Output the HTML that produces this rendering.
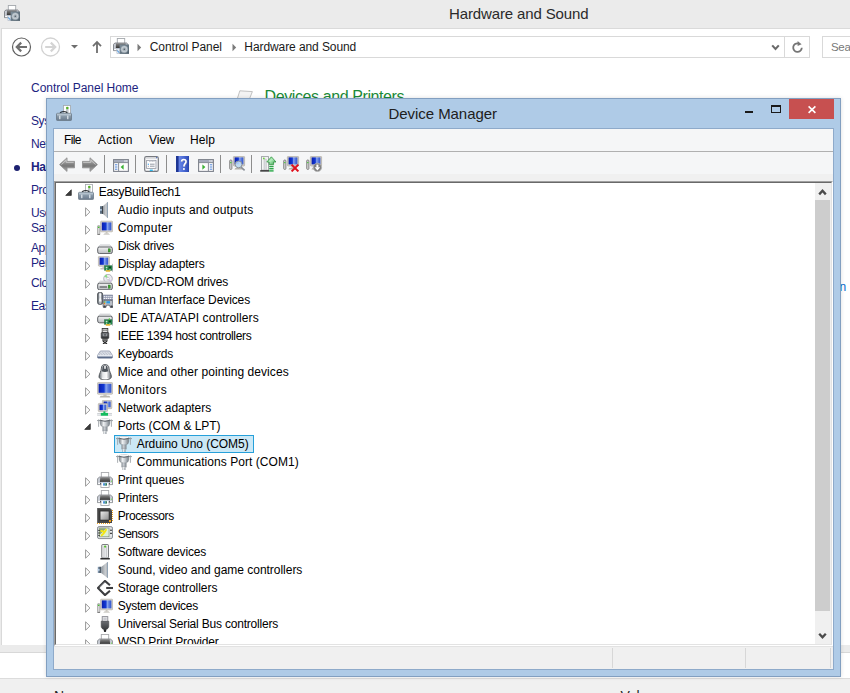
<!DOCTYPE html><html><head><meta charset="utf-8"><title>Device Manager</title><style>

html,body{margin:0;padding:0}
body{width:850px;height:693px;overflow:hidden;background:#fff;position:relative;font-family:"Liberation Sans",sans-serif;font-size:12px;color:#000}
div,span,svg{position:absolute;box-sizing:border-box}
.t{white-space:pre;line-height:18px;height:18px}
.nav{color:#1c2480}

</style></head><body>
<svg width="0" height="0" style="left:0;top:0"><defs>
<linearGradient id="gScr" x1="0" y1="0" x2="1" y2="0"><stop offset="0" stop-color="#0a1eae"/><stop offset="0.42" stop-color="#1238d4"/><stop offset="0.58" stop-color="#8aa6ee"/><stop offset="0.75" stop-color="#5a7ade"/><stop offset="1" stop-color="#2f54cc"/></linearGradient>
<linearGradient id="gBox" x1="0" y1="0" x2="0" y2="1"><stop offset="0" stop-color="#9fb0bd"/><stop offset="1" stop-color="#68788a"/></linearGradient>
<linearGradient id="gCone" x1="0" y1="0" x2="1" y2="0"><stop offset="0" stop-color="#8f9499"/><stop offset="0.6" stop-color="#c9cdd1"/><stop offset="1" stop-color="#a9adb2"/></linearGradient>
<linearGradient id="gDrv" x1="0" y1="0" x2="0" y2="1"><stop offset="0" stop-color="#f4f4f4"/><stop offset="1" stop-color="#b9bcc0"/></linearGradient>
<linearGradient id="gDark" x1="0" y1="0" x2="0" y2="1"><stop offset="0" stop-color="#6a6d72"/><stop offset="1" stop-color="#2e3033"/></linearGradient>
<linearGradient id="gPort" x1="0" y1="0" x2="0" y2="1"><stop offset="0" stop-color="#8d979e"/><stop offset="0.5" stop-color="#c7cdd1"/><stop offset="1" stop-color="#7d868c"/></linearGradient>
<linearGradient id="gPortH" x1="0" y1="0" x2="1" y2="0"><stop offset="0" stop-color="#7a8289"/><stop offset="0.35" stop-color="#eef0f2"/><stop offset="0.6" stop-color="#c6cbd0"/><stop offset="1" stop-color="#747c83"/></linearGradient>
<linearGradient id="gRemote" x1="0" y1="0" x2="1" y2="0"><stop offset="0" stop-color="#555b63"/><stop offset="0.5" stop-color="#c9ced4"/><stop offset="1" stop-color="#5d636b"/></linearGradient>
<linearGradient id="gPrn" x1="0" y1="0" x2="0" y2="1"><stop offset="0" stop-color="#8a8a8a"/><stop offset="1" stop-color="#343434"/></linearGradient>
<linearGradient id="gSpk" x1="0" y1="0" x2="1" y2="1"><stop offset="0" stop-color="#7e8e9a"/><stop offset="1" stop-color="#4e5e6a"/></linearGradient>
<linearGradient id="gMouse" x1="0" y1="0" x2="1" y2="0"><stop offset="0" stop-color="#5a6068"/><stop offset="0.3" stop-color="#e4e6e8"/><stop offset="0.6" stop-color="#fbfbfc"/><stop offset="1" stop-color="#5a6068"/></linearGradient>
<linearGradient id="gCpu" x1="0" y1="0" x2="1" y2="1"><stop offset="0" stop-color="#f0f0f0"/><stop offset="1" stop-color="#8a8a8a"/></linearGradient>
<linearGradient id="gArr" x1="0" y1="0" x2="0" y2="1"><stop offset="0" stop-color="#cacaca"/><stop offset="0.45" stop-color="#868686"/><stop offset="0.6" stop-color="#787878"/><stop offset="1" stop-color="#b0b0b0"/></linearGradient>
<linearGradient id="gHelp" x1="0" y1="0" x2="1" y2="0"><stop offset="0" stop-color="#203a9c"/><stop offset="0.2" stop-color="#6a88e8"/><stop offset="0.6" stop-color="#4a6ad4"/><stop offset="0.9" stop-color="#3250bc"/><stop offset="1" stop-color="#2640a4"/></linearGradient>
<linearGradient id="gGreen" x1="0" y1="0" x2="1" y2="1"><stop offset="0" stop-color="#5ccf6a"/><stop offset="0.45" stop-color="#b4ecbc"/><stop offset="1" stop-color="#2a9a44"/></linearGradient>
</defs></svg>
<div style="left:0;top:0;width:850px;height:29px;background:#ebebeb"></div>
<div style="left:0;top:28px;width:2px;height:625px;background:#ebebeb;border-right:1px solid #d9d9d9"></div>
<div style="left:1px;top:28px;width:849px;height:1px;background:#dadada"></div>
<span class="t" style="left:449px;top:5px;font-size:15px;letter-spacing:-0.133px;color:#2a2a2a">Hardware and Sound</span>
<svg style="left:4px;top:5px" width="16" height="16" viewBox="0 0 16 16"><rect x="4.3" y="0.5" width="7.4" height="5.4" fill="#fff" stroke="#a4a8ad" stroke-width="0.9"/><path d="M1.8 5H13.6L15 6.4V12.6H0.5V6.4Z" fill="#c6cad2" stroke="#6e7278" stroke-width="0.8"/><path d="M3 5.2H12.6V10H2.8Z" fill="url(#gPrn)"/><rect x="1.2" y="11" width="2.4" height="1.2" fill="#fff"/><rect x="3.9" y="10.4" width="4" height="5.2" fill="#e8eef6" stroke="#a9b4c4" stroke-width="0.6"/><path d="M4.6 12.4a2 2 0 0 0 1.8 2" stroke="#3a8ad8" stroke-width="1" fill="none"/><rect x="6.6" y="6.5" width="9.4" height="9.4" fill="url(#gSpk)"/><circle cx="11.3" cy="11.2" r="3.5" fill="#c6ced4" stroke="#8a98a4" stroke-width="0.5"/><circle cx="11.3" cy="11.2" r="2" fill="#aab4bc"/><circle cx="11.3" cy="11.2" r="0.8" fill="#4e5a64"/></svg>
<svg style="left:10px;top:35px" width="24" height="24" viewBox="0 0 24 24"><circle cx="11.5" cy="12" r="9" fill="#fff" stroke="#606060" stroke-width="1.2"/><path d="M17 12H7.4M11.2 7.6L6.8 12L11.2 16.4" fill="none" stroke="#707070" stroke-width="2.2"/></svg><svg style="left:39px;top:35px" width="24" height="24" viewBox="0 0 24 24"><circle cx="11.5" cy="12" r="9" fill="#fff" stroke="#d2d2d2" stroke-width="1.3"/><path d="M6.2 12H15.8M11.8 7.6L16.2 12L11.8 16.4" fill="none" stroke="#d4d4d4" stroke-width="2.2"/></svg><svg style="left:71px;top:45px" width="8" height="4" viewBox="0 0 8 4"><path d="M0 0h7L3.5 3.6z" fill="#6e6e6e"/></svg><svg style="left:91px;top:40px" width="12" height="14" viewBox="0 0 12 14"><path d="M6 13V2M2 6.2L6 2L10 6.2" fill="none" stroke="#6e6e6e" stroke-width="1.8"/></svg>
<div style="left:110px;top:36px;width:675px;height:22px;border:1px solid #d9d9d9;background:#fff"></div>
<div style="left:784px;top:36px;width:26px;height:22px;border:1px solid #d9d9d9;background:#fff"></div>
<div style="left:822px;top:36px;width:40px;height:22px;border:1px solid #d9d9d9;background:#fff"></div>
<svg style="left:113px;top:38px" width="16" height="16" viewBox="0 0 16 16"><rect x="4.3" y="0.5" width="7.4" height="5.4" fill="#fff" stroke="#a4a8ad" stroke-width="0.9"/><path d="M1.8 5H13.6L15 6.4V12.6H0.5V6.4Z" fill="#c6cad2" stroke="#6e7278" stroke-width="0.8"/><path d="M3 5.2H12.6V10H2.8Z" fill="url(#gPrn)"/><rect x="1.2" y="11" width="2.4" height="1.2" fill="#fff"/><rect x="3.9" y="10.4" width="4" height="5.2" fill="#e8eef6" stroke="#a9b4c4" stroke-width="0.6"/><path d="M4.6 12.4a2 2 0 0 0 1.8 2" stroke="#3a8ad8" stroke-width="1" fill="none"/><rect x="6.6" y="6.5" width="9.4" height="9.4" fill="url(#gSpk)"/><circle cx="11.3" cy="11.2" r="3.5" fill="#c6ced4" stroke="#8a98a4" stroke-width="0.5"/><circle cx="11.3" cy="11.2" r="2" fill="#aab4bc"/><circle cx="11.3" cy="11.2" r="0.8" fill="#4e5a64"/></svg>
<svg style="left:137px;top:43px" width="5" height="9" viewBox="0 0 5 9"><path d="M0.5 0.8L4.2 4.5L0.5 8.2z" fill="#7a7a7a"/></svg><svg style="left:232px;top:43px" width="5" height="9" viewBox="0 0 5 9"><path d="M0.5 0.8L4.2 4.5L0.5 8.2z" fill="#7a7a7a"/></svg><svg style="left:771px;top:44px" width="9" height="7" viewBox="0 0 9 7"><path d="M1.2 1.4L4.5 5L7.8 1.4" fill="none" stroke="#6a6a6a" stroke-width="2.1"/></svg><svg style="left:791px;top:41px" width="13" height="13" viewBox="0 0 13 13"><path d="M7.4 2.4A4.3 4.3 0 1 0 10.8 6.8" fill="none" stroke="#757575" stroke-width="1.8"/><path d="M6.6 0L10.6 3.2L6.6 5z" fill="#757575"/></svg>
<span class="t" style="left:149.7px;top:38px;letter-spacing:-0.035px;color:#1a1a1a">Control Panel</span>
<span class="t" style="left:244.3px;top:38px;letter-spacing:-0.084px;color:#1a1a1a">Hardware and Sound</span>
<span class="t" style="left:831px;top:38px;font-size:11.5px;letter-spacing:-0.3px;color:#787878">Sea</span>
<span class="t nav" style="left:31px;top:79px;letter-spacing:-0.033px">Control Panel Home</span>
<span class="t nav" style="left:31px;top:112px;letter-spacing:-0.4px;">Sys</span>
<span class="t nav" style="left:31px;top:135px;letter-spacing:-0.4px;">Net</span>
<span class="t nav" style="left:31px;top:158px;letter-spacing:-0.4px;font-weight:bold;">Har</span>
<span class="t nav" style="left:31px;top:181px;letter-spacing:-0.4px;">Pro</span>
<span class="t nav" style="left:31px;top:204px;letter-spacing:-0.4px;">Use</span>
<span class="t nav" style="left:31px;top:219px;letter-spacing:-0.4px;">Saf</span>
<span class="t nav" style="left:31px;top:239px;letter-spacing:-0.4px;">App</span>
<span class="t nav" style="left:31px;top:254px;letter-spacing:-0.4px;">Per</span>
<span class="t nav" style="left:31px;top:274px;letter-spacing:-0.4px;">Clo</span>
<span class="t nav" style="left:31px;top:297px;letter-spacing:-0.4px;">Eas</span>
<div style="left:14px;top:165px;width:6px;height:6px;border-radius:3px;background:#1c2070"></div>
<span class="t" style="left:264.5px;top:88px;font-size:16px;letter-spacing:-0.401px;color:#1a8a38">Devices and Printers</span>
<svg style="left:236px;top:88px" width="20" height="10" viewBox="0 0 20 10"><path d="M3.8 2.8L16.4 3.6L13.6 10.5H1.4z" fill="#f3f3f3" stroke="#b4b4b4" stroke-width="0.8"/></svg>
<span class="t" style="left:839.5px;top:278px;color:#0a68cc">n</span>
<div style="left:0;top:645px;width:850px;height:8px;background:#ebebeb;border-bottom:1px solid #d8d8d8"></div>
<div style="left:0;top:678px;width:850px;height:15px;background:#f0f0f0;border-top:1px solid #dcdcdc"></div>
<span class="t" style="left:54px;top:687px;font-size:14px;color:#262626">N</span>
<span class="t" style="left:620.5px;top:687px;font-size:14px;color:#262626">Val</span>
<div style="left:46px;top:98px;width:795px;height:579px;background:#afcbe7;border:1px solid #829fc0;box-shadow:0 0 4px rgba(0,0,0,0.14)"></div>
<div style="left:53px;top:128px;width:781px;height:542px;border:1px solid #8eaaca;background:#f0f0f0"></div>
<div style="left:789px;top:99px;width:45px;height:20px;background:#c75050"></div>
<div style="left:745px;top:111px;width:8px;height:2px;background:#1a1a1a"></div><div style="left:771px;top:105px;width:10px;height:8px;border:1px solid #1a1a1a;border-top-width:2px"></div><svg style="left:807px;top:105px" width="10" height="9" viewBox="0 0 10 9"><path d="M1.6 1.4L8.4 7.8M8.4 1.4L1.6 7.8" stroke="#fff" stroke-width="1.6"/></svg>
<svg style="left:56px;top:105px" width="16" height="16" viewBox="0 0 16 16"><rect x="7.5" y="0.5" width="7" height="8" fill="#fff" stroke="#a2a7ac" stroke-width="0.8"/><rect x="10" y="2" width="2.6" height="6" fill="#c3c9ce"/><circle cx="11.3" cy="3" r="1.2" fill="#55b424"/><path d="M4.2 8.6C4.2 5.8 11.3 5.8 11.3 8.6" stroke="#2b2f33" stroke-width="1.2" fill="none"/><rect x="0.5" y="8.3" width="15" height="7.3" rx="1" fill="url(#gBox)" stroke="#62707c" stroke-width="0.7"/><rect x="1" y="8.7" width="14" height="1.7" fill="#b4c2ce"/><rect x="3.2" y="10.6" width="1.2" height="3.6" fill="#e4eaef"/><rect x="11.2" y="10.6" width="1.2" height="3.6" fill="#e4eaef"/></svg>
<span class="t" style="left:388.5px;top:105px;font-size:15px;color:#202020;letter-spacing:-0.055px">Device Manager</span>
<div style="left:54px;top:129px;width:779px;height:22px;background:#f5f6f7"></div>
<div style="left:54px;top:151px;width:779px;height:1px;background:#b0b0b0"></div>
<div style="left:54px;top:152px;width:779px;height:22px;background:#f5f6f7"></div>
<span class="t" style="left:64px;top:131px;letter-spacing:-0.615px">File</span>
<span class="t" style="left:98px;top:131px;letter-spacing:0.228px">Action</span>
<span class="t" style="left:149px;top:131px;letter-spacing:-0.099px">View</span>
<span class="t" style="left:190px;top:131px;letter-spacing:0.104px">Help</span>
<svg style="left:59px;top:157px" width="16" height="16" viewBox="0 0 16 16"><path d="M0.6 7.6L8 0.8V4.4H15.6V10.8H8V14.4Z" fill="url(#gArr)" stroke="#8e8e8e" stroke-width="0.9" stroke-linejoin="round"/><path d="M2.4 7.6L7.2 3.2V5.4H14.6" fill="none" stroke="#cfcfcf" stroke-width="0.8"/></svg><svg style="left:82px;top:157px" width="16" height="16" viewBox="0 0 16 16"><path d="M15.4 7.6L8 0.8V4.4H0.4V10.8H8V14.4Z" fill="url(#gArr)" stroke="#8e8e8e" stroke-width="0.9" stroke-linejoin="round"/><path d="M1.2 5.4H8.8V3.2L13.6 7.6" fill="none" stroke="#cfcfcf" stroke-width="0.8"/></svg><div style="left:104px;top:155px;width:1px;height:18px;background:#8d8d8d"></div><svg style="left:113px;top:159px" width="16" height="13" viewBox="0 0 16 13"><rect x="0.6" y="0.6" width="14.8" height="11.8" fill="#fdfdfd" stroke="#7d828c" stroke-width="1.1"/><rect x="1" y="1" width="14" height="2.4" fill="#a4aaba"/><path d="M1 3.6h14" stroke="#7d828c" stroke-width="0.9"/><rect x="11.4" y="1.4" width="1.2" height="1.2" fill="#fff"/><rect x="13.2" y="1.4" width="1.2" height="1.2" fill="#fff"/><path d="M5.6 4v8" stroke="#7d828c" stroke-width="0.9"/><path d="M2 5.8h2.4M2 8h2.4M2 10.2h2.4" stroke="#3a78d8" stroke-width="0.9"/><path d="M10.6 5.4v5.4L7.6 8.1z" fill="#3ab034"/></svg><div style="left:135px;top:155px;width:1px;height:18px;background:#8d8d8d"></div><svg style="left:144px;top:156px" width="15" height="16" viewBox="0 0 15 16"><rect x="0.7" y="0.7" width="13.6" height="14.6" rx="1.6" fill="#fcfcfd" stroke="#777a80" stroke-width="1.2"/><path d="M1.6 2.2h11.8" stroke="#c4c7cd" stroke-width="0.8"/><rect x="12" y="1" width="1.2" height="1.2" fill="#5a78c0"/><rect x="2.6" y="4.4" width="9.4" height="8" fill="#fdfdfe" stroke="#9a9ea8" stroke-width="0.9"/><rect x="5.6" y="4.9" width="2" height="0.9" fill="#fff" stroke="#b4b8c0" stroke-width="0.4"/><rect x="8.6" y="4.9" width="2" height="0.9" fill="#fff" stroke="#b4b8c0" stroke-width="0.4"/><path d="M6 8.2h4.6M6 10.2h4.6" stroke="#8a8e98" stroke-width="0.9"/><rect x="3.8" y="7.7" width="1.1" height="1.1" fill="#2a9af0"/><rect x="3.9" y="9.8" width="0.9" height="0.9" fill="#8a8e98"/><rect x="5.8" y="13.6" width="3" height="1.3" fill="#1cb4ee"/><rect x="10" y="13.8" width="2.4" height="1" fill="#b4b8c0"/></svg><div style="left:166px;top:155px;width:1px;height:18px;background:#8d8d8d"></div><svg style="left:176px;top:156px" width="13" height="16" viewBox="0 0 13 16"><rect x="0" y="0" width="13" height="16" fill="url(#gHelp)"/><rect x="0" y="0" width="2.6" height="16" fill="#1e3694"/><path d="M5.6 5.6C5.6 2.8 10 2.8 10 5.4C10 7.4 7.9 7.8 7.9 10.4" fill="none" stroke="#7a86b8" stroke-width="1.6" transform="translate(0.5,0.5)"/><path d="M5.6 5.6C5.6 2.8 10 2.8 10 5.4C10 7.4 7.9 7.8 7.9 10.4" fill="none" stroke="#fff" stroke-width="1.6"/><circle cx="7.9" cy="13" r="1.05" fill="#fff"/></svg><svg style="left:198px;top:159px" width="16" height="13" viewBox="0 0 16 13"><rect x="0.6" y="0.6" width="14.8" height="11.8" fill="#fdfdfd" stroke="#7d828c" stroke-width="1.1"/><rect x="1" y="1" width="14" height="2.4" fill="#a4aaba"/><path d="M1 3.6h14" stroke="#7d828c" stroke-width="0.9"/><rect x="11.4" y="1.4" width="1.2" height="1.2" fill="#fff"/><rect x="13.2" y="1.4" width="1.2" height="1.2" fill="#fff"/><path d="M10.4 4v8" stroke="#7d828c" stroke-width="0.9"/><path d="M11.8 5.8h2.4M11.8 8h2.4M11.8 10.2h2.4" stroke="#3a78d8" stroke-width="0.9"/><path d="M4.4 5.4v5.4L7.4 8.1z" fill="#3ab034"/></svg><div style="left:220px;top:155px;width:1px;height:18px;background:#8d8d8d"></div><svg style="left:229px;top:156px" width="17" height="16" viewBox="0 0 17 16"><g transform="translate(0,0)"><rect x="4.4" y="0.4" width="11.2" height="9.6" rx="0.8" fill="#d4d1c9" stroke="#a29e95" stroke-width="0.6"/><rect x="5.6" y="1.4" width="8.8" height="7" fill="url(#gScr)"/><rect x="8.4" y="10" width="3" height="2" fill="#c4c1b9"/><path d="M6.4 12h7l1 1.4h-9z" fill="#b4b1a9"/><rect x="0.7" y="4" width="2.2" height="9.4" rx="0.9" fill="#d4d4d4" stroke="#6e6e6e" stroke-width="0.8"/><rect x="1.2" y="6" width="1.2" height="1.2" fill="#40c830"/></g><circle cx="9.6" cy="8.4" r="3.4" fill="#bfe0f8" fill-opacity="0.85" stroke="#8a9098" stroke-width="1"/><path d="M12 11l3.6 3.4" stroke="#8a8f96" stroke-width="1.6"/></svg><div style="left:251px;top:155px;width:1px;height:18px;background:#8d8d8d"></div><svg style="left:260px;top:156px" width="16" height="16" viewBox="0 0 16 16"><rect x="1.5" y="0.6" width="7" height="13.6" fill="#f6f6f6" stroke="#9c9fa3" stroke-width="0.9"/><rect x="4" y="3" width="2.2" height="11" fill="#dcdee1" stroke="#b0b3b8" stroke-width="0.5"/><circle cx="3.8" cy="2.4" r="0.9" fill="#6ad040"/><rect x="0.2" y="14.2" width="9" height="1.4" fill="#2b2b2b"/><path d="M11.4 0.8L16 6h-2.4v2.6H9.2V6H6.8z" fill="url(#gGreen)" stroke="#238a34" stroke-width="0.7"/><rect x="9.2" y="9.8" width="4.4" height="1.4" fill="#2aa848"/><rect x="9.2" y="12" width="4.4" height="1.4" fill="#2aa848"/><rect x="9.2" y="14.2" width="4.4" height="1.4" fill="#2aa848"/></svg><svg style="left:283px;top:156px" width="17" height="16" viewBox="0 0 17 16"><g transform="translate(0,0)"><rect x="4.4" y="0.4" width="11.2" height="9.6" rx="0.8" fill="#d4d1c9" stroke="#a29e95" stroke-width="0.6"/><rect x="5.6" y="1.4" width="8.8" height="7" fill="url(#gScr)"/><rect x="8.4" y="10" width="3" height="2" fill="#c4c1b9"/><path d="M6.4 12h7l1 1.4h-9z" fill="#b4b1a9"/><rect x="0.7" y="4" width="2.2" height="9.4" rx="0.9" fill="#d4d4d4" stroke="#6e6e6e" stroke-width="0.8"/><rect x="1.2" y="6" width="1.2" height="1.2" fill="#40c830"/></g><path d="M8.6 8.6L15.4 15.4M15.4 8.6L8.6 15.4" stroke="#e0101c" stroke-width="2"/></svg><svg style="left:306px;top:156px" width="17" height="16" viewBox="0 0 17 16"><g transform="translate(0,0)"><rect x="4.4" y="0.4" width="11.2" height="9.6" rx="0.8" fill="#d4d1c9" stroke="#a29e95" stroke-width="0.6"/><rect x="5.6" y="1.4" width="8.8" height="7" fill="url(#gScr)"/><rect x="8.4" y="10" width="3" height="2" fill="#c4c1b9"/><path d="M6.4 12h7l1 1.4h-9z" fill="#b4b1a9"/><rect x="0.7" y="4" width="2.2" height="9.4" rx="0.9" fill="#d4d4d4" stroke="#6e6e6e" stroke-width="0.8"/><rect x="1.2" y="6" width="1.2" height="1.2" fill="#40c830"/></g><circle cx="11.4" cy="11.4" r="4.2" fill="#808080" stroke="#b4b4b4" stroke-width="0.8"/><path d="M11.4 8.6v3" stroke="#fff" stroke-width="2"/><path d="M8.6 11.2l2.8 3.2 2.8-3.2z" fill="#fff"/></svg>
<div style="left:54px;top:181px;width:779px;height:465px;background:#fff;border:1px solid;border-color:#a0a0a0 #fff #fff #a0a0a0"></div>
<div style="left:55px;top:182px;width:777px;height:463px;background:#fff;border:1px solid;border-color:#696969 #e3e3e3 #e3e3e3 #696969"></div>
<div id="tree" style="left:56px;top:183px;width:759px;height:461px;overflow:hidden">
<svg style="left:9px;top:6px" width="7" height="7" viewBox="0 0 7 7"><path d="M6.3 0.8V6.4H0.7Z" fill="#3c3c3c" stroke="#262626" stroke-width="0.7"/></svg>
<svg style="left:22px;top:1px" width="16" height="16" viewBox="0 0 16 16"><rect x="7.5" y="0.5" width="7" height="8" fill="#fff" stroke="#a2a7ac" stroke-width="0.8"/><rect x="10" y="2" width="2.6" height="6" fill="#c3c9ce"/><circle cx="11.3" cy="3" r="1.2" fill="#55b424"/><path d="M4.2 8.6C4.2 5.8 11.3 5.8 11.3 8.6" stroke="#2b2f33" stroke-width="1.2" fill="none"/><rect x="0.5" y="8.3" width="15" height="7.3" rx="1" fill="url(#gBox)" stroke="#62707c" stroke-width="0.7"/><rect x="1" y="8.7" width="14" height="1.7" fill="#b4c2ce"/><rect x="3.2" y="10.6" width="1.2" height="3.6" fill="#e4eaef"/><rect x="11.2" y="10.6" width="1.2" height="3.6" fill="#e4eaef"/></svg>
<span class="t" style="left:42.7px;top:0px;letter-spacing:-0.261px">EasyBuildTech1</span>
<svg style="left:29px;top:23.6px" width="6" height="10" viewBox="0 0 6 10"><path d="M0.6 0.8V9.2L4.9 5Z" fill="#fff" stroke="#989898" stroke-width="1"/></svg>
<svg style="left:41px;top:19px" width="16" height="16" viewBox="0 0 16 16"><path d="M5.6 4.6L10.2 0.2H11V15.8H10.2L5.6 11.4Z" fill="url(#gCone)"/><rect x="10.1" y="0.2" width="0.9" height="15.6" fill="#8fa2b4"/><rect x="3" y="4.2" width="3" height="7.6" fill="#5d7083"/><rect x="4.9" y="4.2" width="1.1" height="7.6" fill="#3c4248"/><rect x="3" y="7" width="1.9" height="1.8" fill="#a9c0d6"/></svg>
<span class="t" style="left:61.7px;top:18px;letter-spacing:0.147px">Audio inputs and outputs</span>
<svg style="left:29px;top:41.6px" width="6" height="10" viewBox="0 0 6 10"><path d="M0.6 0.8V9.2L4.9 5Z" fill="#fff" stroke="#989898" stroke-width="1"/></svg>
<svg style="left:41px;top:37px" width="16" height="16" viewBox="0 0 16 16"><rect x="3.6" y="1.2" width="12" height="10.6" rx="0.8" fill="#d9d6cf" stroke="#a9a59c" stroke-width="0.6"/><rect x="4.8" y="2.4" width="9.6" height="8.0" fill="url(#gScr)"/><path d="M7.6 13.4h4l1.4 1.2h-6.8z" fill="#b4b1a9"/><rect x="8.6" y="11.8" width="2" height="1.8" fill="#c9c6be"/><rect x="0.5" y="5.6" width="2.4" height="8.6" rx="0.8" fill="#d6d6d6" stroke="#8b8b8b" stroke-width="0.6"/><rect x="1" y="6.6" width="1.4" height="1.4" fill="#3fc02a"/><rect x="0.3" y="14" width="2.8" height="0.8" fill="#6b6b6b"/></svg>
<span class="t" style="left:61.7px;top:36px;letter-spacing:0.259px">Computer</span>
<svg style="left:29px;top:59.6px" width="6" height="10" viewBox="0 0 6 10"><path d="M0.6 0.8V9.2L4.9 5Z" fill="#fff" stroke="#989898" stroke-width="1"/></svg>
<svg style="left:41px;top:55px" width="16" height="16" viewBox="0 0 16 16"><path d="M3.4 7h9.2l2.6 2.4H0.8z" fill="#f4f4f5" stroke="#b0b3b7" stroke-width="0.7"/><rect x="0.7" y="9" width="14.6" height="6.6" rx="1.8" fill="url(#gDrv)" stroke="#5e6165" stroke-width="1"/><rect x="11.2" y="10.8" width="2" height="3.2" fill="#3aa62c" stroke="#2a6a22" stroke-width="0.4"/></svg>
<span class="t" style="left:61.7px;top:54px;letter-spacing:-0.219px">Disk drives</span>
<svg style="left:29px;top:77.6px" width="6" height="10" viewBox="0 0 6 10"><path d="M0.6 0.8V9.2L4.9 5Z" fill="#fff" stroke="#989898" stroke-width="1"/></svg>
<svg style="left:41px;top:73px" width="16" height="16" viewBox="0 0 16 16"><rect x="1.4" y="0.4" width="11" height="9.8" rx="0.8" fill="#d9d6cf" stroke="#a9a59c" stroke-width="0.6"/><rect x="2.5999999999999996" y="1.6" width="8.6" height="7.200000000000001" fill="url(#gScr)"/><rect x="5.4" y="10.2" width="2.4" height="2" fill="#c9c6be"/><path d="M3.4 12.2h5v1.2h-5z" fill="#b9b6ae"/><rect x="7.6" y="9.8" width="7.8" height="4.4" fill="#23884a" stroke="#0f6030" stroke-width="0.5"/><rect x="8.799999999999999" y="10.8" width="1.6" height="1.4" fill="#c4e4cc"/><rect x="11.8" y="10.600000000000001" width="2.2" height="2" fill="#0b4220"/><rect x="9.0" y="12.8" width="1.2" height="0.9" fill="#c4e4cc"/><rect x="12.399999999999999" y="12.8" width="1.2" height="0.9" fill="#c4e4cc"/><rect x="8.799999999999999" y="14.200000000000001" width="4.4" height="1.5" fill="#e8b420"/><rect x="15.1" y="7.800000000000001" width="0.7" height="8" fill="#a4aab0"/></svg>
<span class="t" style="left:61.7px;top:72px;letter-spacing:-0.159px">Display adapters</span>
<svg style="left:29px;top:95.6px" width="6" height="10" viewBox="0 0 6 10"><path d="M0.6 0.8V9.2L4.9 5Z" fill="#fff" stroke="#989898" stroke-width="1"/></svg>
<svg style="left:41px;top:91px" width="16" height="16" viewBox="0 0 16 16"><circle cx="11" cy="4.6" r="4.3" fill="#ececf1" stroke="#9a9aa6" stroke-width="0.7"/><path d="M11 4.6L7.2 2.6A4.3 4.3 0 0 1 9.6 0.6z" fill="#8fdc86"/><path d="M11 4.6L14.8 6.8A4.3 4.3 0 0 1 12.2 8.7z" fill="#dcc4ec"/><circle cx="11" cy="4.6" r="1.3" fill="#fff" stroke="#a8a8b4" stroke-width="0.5"/><path d="M3.4 7.2h9.2l2.6 2.4H0.8z" fill="#f4f4f5" stroke="#b0b3b7" stroke-width="0.7"/><rect x="0.7" y="9.2" width="14.6" height="6.6" rx="1.8" fill="url(#gDrv)" stroke="#5e6165" stroke-width="1"/><rect x="2.6" y="12.4" width="7.4" height="1.2" fill="#55585c"/><rect x="11.2" y="11" width="2" height="3.2" fill="#3aa62c" stroke="#2a6a22" stroke-width="0.4"/></svg>
<span class="t" style="left:61.7px;top:90px;letter-spacing:-0.178px">DVD/CD-ROM drives</span>
<svg style="left:29px;top:113.6px" width="6" height="10" viewBox="0 0 6 10"><path d="M0.6 0.8V9.2L4.9 5Z" fill="#fff" stroke="#989898" stroke-width="1"/></svg>
<svg style="left:41px;top:109px" width="16" height="16" viewBox="0 0 16 16"><rect x="0.6" y="0.4" width="5" height="12" rx="1.8" fill="url(#gRemote)" stroke="#3e4248" stroke-width="0.8"/><path d="M2.2 2.2a1 1 0 1 1 2 0L3.8 5.6L4.6 9.4H1.8L2.6 5.6z" fill="#f4f5f6"/><rect x="6" y="3" width="10" height="5.6" rx="0.8" fill="#8e96ae" stroke="#6a728a" stroke-width="0.5"/><path d="M6.8 4.4h8.6" stroke="#fff" stroke-width="1" stroke-dasharray="1.1 0.8"/><path d="M6.6 6.4h9" stroke="#f2f2f6" stroke-width="1.4" stroke-dasharray="1.4 0.6"/><path d="M7 8.2h8c1.2 1.6 1.4 5.4 0.8 7.4h-2.4l-0.8-2.4H9.6l-0.8 2.4H6.4c-0.6-2-0.6-5.8 0.6-7.4z" fill="#b9bec6" stroke="#4a4e56" stroke-width="0.7"/><rect x="9.4" y="9.2" width="3.6" height="2.2" fill="#2a9ae4"/><circle cx="7.8" cy="10" r="0.8" fill="#40c040"/><circle cx="7.4" cy="11.6" r="0.8" fill="#f08020"/><rect x="6.4" y="13.4" width="2.4" height="2.2" rx="0.8" fill="#3e4248"/><rect x="13.4" y="13.4" width="2.4" height="2.2" rx="0.8" fill="#3e4248"/></svg>
<span class="t" style="left:61.7px;top:108px;letter-spacing:-0.102px">Human Interface Devices</span>
<svg style="left:29px;top:131.6px" width="6" height="10" viewBox="0 0 6 10"><path d="M0.6 0.8V9.2L4.9 5Z" fill="#fff" stroke="#989898" stroke-width="1"/></svg>
<svg style="left:41px;top:127px" width="16" height="16" viewBox="0 0 16 16"><path d="M3.4 4.2h9.2l2.6 2.4H0.8z" fill="#f4f4f5" stroke="#b0b3b7" stroke-width="0.7"/><rect x="0.7" y="6.2" width="14.6" height="6.6" rx="1.8" fill="url(#gDrv)" stroke="#5e6165" stroke-width="1"/><rect x="7.6" y="9.8" width="7.8" height="4.4" fill="#23884a" stroke="#0f6030" stroke-width="0.5"/><rect x="8.799999999999999" y="10.8" width="1.6" height="1.4" fill="#c4e4cc"/><rect x="11.8" y="10.600000000000001" width="2.2" height="2" fill="#0b4220"/><rect x="9.0" y="12.8" width="1.2" height="0.9" fill="#c4e4cc"/><rect x="12.399999999999999" y="12.8" width="1.2" height="0.9" fill="#c4e4cc"/><rect x="8.799999999999999" y="14.200000000000001" width="4.4" height="1.5" fill="#e8b420"/><rect x="15.1" y="7.800000000000001" width="0.7" height="8" fill="#a4aab0"/><rect x="11.8" y="8.2" width="1" height="1.6" fill="#50d030"/></svg>
<span class="t" style="left:61.7px;top:126px;letter-spacing:0.077px">IDE ATA/ATAPI controllers</span>
<svg style="left:29px;top:149.6px" width="6" height="10" viewBox="0 0 6 10"><path d="M0.6 0.8V9.2L4.9 5Z" fill="#fff" stroke="#989898" stroke-width="1"/></svg>
<svg style="left:41px;top:145px" width="16" height="16" viewBox="0 0 16 16"><rect x="5.2" y="0.5" width="5.6" height="4.2" fill="#f2f2f2" stroke="#3a3a3a" stroke-width="0.9"/><rect x="6.4" y="1.4" width="1.1" height="1.8" fill="#4a4a4a"/><rect x="8.5" y="1.4" width="1.1" height="1.8" fill="#4a4a4a"/><rect x="4.2" y="4.6" width="7.6" height="5.8" rx="0.6" fill="url(#gDark)" stroke="#222" stroke-width="0.5"/><rect x="5.8" y="5.6" width="4.4" height="2.6" fill="#9a9da1"/><rect x="6.8" y="6.2" width="2.4" height="1.4" fill="#55585c"/><rect x="5.4" y="10.4" width="5.2" height="2.8" fill="#1e1e1e"/><path d="M5.4 11.3h5.2M5.4 12.3h5.2" stroke="#d0d0d0" stroke-width="0.5"/><path d="M6 13.2l4 2.8M10 13.2l-4 2.8" stroke="#222" stroke-width="1.2"/></svg>
<span class="t" style="left:61.7px;top:144px;letter-spacing:-0.323px">IEEE 1394 host controllers</span>
<svg style="left:29px;top:167.6px" width="6" height="10" viewBox="0 0 6 10"><path d="M0.6 0.8V9.2L4.9 5Z" fill="#fff" stroke="#989898" stroke-width="1"/></svg>
<svg style="left:41px;top:163px" width="16" height="16" viewBox="0 0 16 16"><path d="M3.4 5h9.2l3 4.6v1.6a0.8 0.8 0 0 1-0.8 0.8H1.2a0.8 0.8 0 0 1-0.8-0.8V9.6z" fill="#e9edf4" stroke="#8a93a8" stroke-width="0.8"/><path d="M3.4 6.2h9.4M2.8 7.4h10.6M2.2 8.6h11.8" stroke="#a4aab8" stroke-width="0.8" stroke-dasharray="0.9 0.7"/><path d="M0.6 10.4h14.8v1a0.8 0.8 0 0 1-0.8 0.8H1.4a0.8 0.8 0 0 1-0.8-0.8z" fill="#5a6a88"/></svg>
<span class="t" style="left:61.7px;top:162px;letter-spacing:-0.234px">Keyboards</span>
<svg style="left:29px;top:185.6px" width="6" height="10" viewBox="0 0 6 10"><path d="M0.6 0.8V9.2L4.9 5Z" fill="#fff" stroke="#989898" stroke-width="1"/></svg>
<svg style="left:41px;top:181px" width="16" height="16" viewBox="0 0 16 16"><path d="M8 0.5C5.4 0.5 4.4 2 4.4 4.2C4.4 7 2 10 2 12.6C2 15 4.8 15.8 8 15.8C11.2 15.8 14.4 15 14.4 12.6C14.4 10 12 7 12 4.2C12 2 10.6 0.5 8 0.5Z" fill="url(#gMouse)" stroke="#3e4248" stroke-width="0.8"/><path d="M8 1.2C6 1.2 5.4 2.4 5.4 4.2C5.4 5.4 5 6.4 4.6 7.2C6.8 8.2 9.2 8.2 11.4 7.2C11 6.4 10.6 5.4 10.6 4.2C10.6 2.4 10 1.2 8 1.2Z" fill="#4e545c"/><rect x="7.2" y="1.8" width="1.6" height="3.2" rx="0.8" fill="#f4f4f4"/><path d="M5 14.2C7 15 9.4 15 11.4 14.2" stroke="#fff" stroke-width="0.8" fill="none"/></svg>
<span class="t" style="left:61.7px;top:180px;letter-spacing:0.074px">Mice and other pointing devices</span>
<svg style="left:29px;top:203.6px" width="6" height="10" viewBox="0 0 6 10"><path d="M0.6 0.8V9.2L4.9 5Z" fill="#fff" stroke="#989898" stroke-width="1"/></svg>
<svg style="left:41px;top:199px" width="16" height="16" viewBox="0 0 16 16"><rect x="0.4" y="0.6" width="15.2" height="11.6" rx="0.8" fill="#d9d6cf" stroke="#a9a59c" stroke-width="0.6"/><rect x="1.6" y="1.7999999999999998" width="12.799999999999999" height="9.0" fill="url(#gScr)"/><rect x="6.4" y="12.2" width="3.2" height="1.8" fill="#c9c6be"/><path d="M3.6 13.8h8.8l1 1.6H2.6z" fill="#b9b6ae"/></svg>
<span class="t" style="left:61.7px;top:198px;letter-spacing:0.426px">Monitors</span>
<svg style="left:29px;top:221.6px" width="6" height="10" viewBox="0 0 6 10"><path d="M0.6 0.8V9.2L4.9 5Z" fill="#fff" stroke="#989898" stroke-width="1"/></svg>
<svg style="left:41px;top:217px" width="16" height="16" viewBox="0 0 16 16"><rect x="5.4" y="0.3" width="9.4" height="8.4" rx="0.8" fill="#d9d6cf" stroke="#a9a59c" stroke-width="0.6"/><rect x="6.6000000000000005" y="1.5" width="7.0" height="5.800000000000001" fill="url(#gScr)"/><rect x="1.3" y="3.4" width="9.2" height="8.2" rx="0.8" fill="#d9d6cf" stroke="#a9a59c" stroke-width="0.6"/><rect x="2.5" y="4.6" width="6.799999999999999" height="5.6" fill="url(#gScr)"/><rect x="0.2" y="13.2" width="14.8" height="2.4" fill="#c4c8cc"/><rect x="0.2" y="14" width="14.8" height="0.8" fill="#f0f2f4"/><rect x="3.8" y="12.9" width="7.2" height="2.8" fill="#12bc5e"/><rect x="6.4" y="11.4" width="2" height="1.8" fill="#12bc5e"/></svg>
<span class="t" style="left:61.7px;top:216px;letter-spacing:-0.036px">Network adapters</span>
<svg style="left:28px;top:240px" width="7" height="7" viewBox="0 0 7 7"><path d="M6.3 0.8V6.4H0.7Z" fill="#3c3c3c" stroke="#262626" stroke-width="0.7"/></svg>
<svg style="left:41px;top:235px" width="16" height="16" viewBox="0 0 16 16"><path d="M0.2 2.6h15.6" stroke="#7c8288" stroke-width="0.9"/><rect x="1.2" y="1.4" width="0.9" height="7.4" fill="#9ea4a9"/><rect x="13.9" y="1.4" width="0.9" height="7.4" fill="#9ea4a9"/><path d="M3.2 1.4Q8 -0.2 12.8 1.4V5.2Q12.8 8 10.4 8.6H5.6Q3.2 8 3.2 5.2Z" fill="url(#gPortH)" stroke="#7a8288" stroke-width="0.5"/><ellipse cx="8" cy="1.5" rx="4.6" ry="0.9" fill="#f6f7f8"/><path d="M3.5 2.5Q8 4 12.5 2.5" fill="none" stroke="#4e545a" stroke-width="0.9"/><rect x="5.6" y="8.6" width="4.8" height="4.8" fill="url(#gPortH)"/><path d="M5.6 9.8h4.8M5.6 11.2h4.8M5.6 12.6h4.8" stroke="#8a9197" stroke-width="0.6"/><rect x="6.6" y="13.4" width="2.8" height="2.6" fill="url(#gPortH)"/></svg>
<span class="t" style="left:61.7px;top:234px;letter-spacing:-0.082px">Ports (COM &amp; LPT)</span>
<div style="left:58px;top:252px;width:140px;height:18px;background:#cbe8f6;border:1px solid #26a0da"></div>
<svg style="left:60px;top:253px" width="16" height="16" viewBox="0 0 16 16"><path d="M0.2 2.6h15.6" stroke="#7c8288" stroke-width="0.9"/><rect x="1.2" y="1.4" width="0.9" height="7.4" fill="#9ea4a9"/><rect x="13.9" y="1.4" width="0.9" height="7.4" fill="#9ea4a9"/><path d="M3.2 1.4Q8 -0.2 12.8 1.4V5.2Q12.8 8 10.4 8.6H5.6Q3.2 8 3.2 5.2Z" fill="url(#gPortH)" stroke="#7a8288" stroke-width="0.5"/><ellipse cx="8" cy="1.5" rx="4.6" ry="0.9" fill="#f6f7f8"/><path d="M3.5 2.5Q8 4 12.5 2.5" fill="none" stroke="#4e545a" stroke-width="0.9"/><rect x="5.6" y="8.6" width="4.8" height="4.8" fill="url(#gPortH)"/><path d="M5.6 9.8h4.8M5.6 11.2h4.8M5.6 12.6h4.8" stroke="#8a9197" stroke-width="0.6"/><rect x="6.6" y="13.4" width="2.8" height="2.6" fill="url(#gPortH)"/></svg>
<span class="t" style="left:80.7px;top:252px;letter-spacing:-0.042px">Arduino Uno (COM5)</span>
<svg style="left:60px;top:271px" width="16" height="16" viewBox="0 0 16 16"><path d="M0.2 2.6h15.6" stroke="#7c8288" stroke-width="0.9"/><rect x="1.2" y="1.4" width="0.9" height="7.4" fill="#9ea4a9"/><rect x="13.9" y="1.4" width="0.9" height="7.4" fill="#9ea4a9"/><path d="M3.2 1.4Q8 -0.2 12.8 1.4V5.2Q12.8 8 10.4 8.6H5.6Q3.2 8 3.2 5.2Z" fill="url(#gPortH)" stroke="#7a8288" stroke-width="0.5"/><ellipse cx="8" cy="1.5" rx="4.6" ry="0.9" fill="#f6f7f8"/><path d="M3.5 2.5Q8 4 12.5 2.5" fill="none" stroke="#4e545a" stroke-width="0.9"/><rect x="5.6" y="8.6" width="4.8" height="4.8" fill="url(#gPortH)"/><path d="M5.6 9.8h4.8M5.6 11.2h4.8M5.6 12.6h4.8" stroke="#8a9197" stroke-width="0.6"/><rect x="6.6" y="13.4" width="2.8" height="2.6" fill="url(#gPortH)"/></svg>
<span class="t" style="left:80.7px;top:270px;letter-spacing:0.051px">Communications Port (COM1)</span>
<svg style="left:29px;top:293.6px" width="6" height="10" viewBox="0 0 6 10"><path d="M0.6 0.8V9.2L4.9 5Z" fill="#fff" stroke="#989898" stroke-width="1"/></svg>
<svg style="left:41px;top:289px" width="16" height="16" viewBox="0 0 16 16"><rect x="4.3" y="0.5" width="7.4" height="5.2" fill="#fff" stroke="#a9abae" stroke-width="0.9"/><path d="M2.6 5H13.4L15.6 6.8V12.6H0.4V6.8Z" fill="#c6cad2" stroke="#7e8186" stroke-width="0.8"/><path d="M3.3 5.2H12.7L13.1 10H2.9Z" fill="url(#gPrn)"/><rect x="1.2" y="10.8" width="2.2" height="1.3" fill="#fff"/><rect x="12.6" y="10.8" width="2.2" height="1.3" fill="#fff"/><rect x="3.9" y="10.2" width="8.2" height="5.3" fill="#fff" stroke="#9b9da1" stroke-width="0.8"/><rect x="3.9" y="10.1" width="8.2" height="0.9" fill="#c4d4e6"/><path d="M3 12.2l0.7-1.4l0.7 1.4zM11.6 12.2l0.7-1.4l0.7 1.4z" fill="#16182a"/><rect x="6.2" y="11.2" width="1.5" height="2.4" fill="#2a7ee4"/><rect x="7.7" y="11.2" width="2.2" height="2.4" fill="#1a6450"/><rect x="8.3" y="11.2" width="0.6" height="2.4" fill="#9ad8c0"/><rect x="14" y="8.6" width="1" height="1.2" fill="#78e458"/></svg>
<span class="t" style="left:61.7px;top:288px;letter-spacing:-0.081px">Print queues</span>
<svg style="left:29px;top:311.6px" width="6" height="10" viewBox="0 0 6 10"><path d="M0.6 0.8V9.2L4.9 5Z" fill="#fff" stroke="#989898" stroke-width="1"/></svg>
<svg style="left:41px;top:307px" width="16" height="16" viewBox="0 0 16 16"><rect x="4.3" y="0.5" width="7.4" height="5.2" fill="#fff" stroke="#a9abae" stroke-width="0.9"/><path d="M2.6 5H13.4L15.6 6.8V12.6H0.4V6.8Z" fill="#c6cad2" stroke="#7e8186" stroke-width="0.8"/><path d="M3.3 5.2H12.7L13.1 10H2.9Z" fill="url(#gPrn)"/><rect x="1.2" y="10.8" width="2.2" height="1.3" fill="#fff"/><rect x="12.6" y="10.8" width="2.2" height="1.3" fill="#fff"/><rect x="3.9" y="10.2" width="8.2" height="5.3" fill="#fff" stroke="#9b9da1" stroke-width="0.8"/><rect x="3.9" y="10.1" width="8.2" height="0.9" fill="#c4d4e6"/><path d="M3 12.2l0.7-1.4l0.7 1.4zM11.6 12.2l0.7-1.4l0.7 1.4z" fill="#16182a"/><rect x="6.2" y="11.2" width="1.5" height="2.4" fill="#2a7ee4"/><rect x="7.7" y="11.2" width="2.2" height="2.4" fill="#1a6450"/><rect x="8.3" y="11.2" width="0.6" height="2.4" fill="#9ad8c0"/><rect x="14" y="8.6" width="1" height="1.2" fill="#78e458"/></svg>
<span class="t" style="left:61.7px;top:306px;letter-spacing:-0.121px">Printers</span>
<svg style="left:29px;top:329.6px" width="6" height="10" viewBox="0 0 6 10"><path d="M0.6 0.8V9.2L4.9 5Z" fill="#fff" stroke="#989898" stroke-width="1"/></svg>
<svg style="left:41px;top:325px" width="16" height="16" viewBox="0 0 16 16"><path d="M0.2 0.2H12.8L15 2.4V15H0.2z" fill="#464646"/><path d="M0.2 0.2H12.8L15 2.4" fill="none" stroke="#2e2e2e" stroke-width="0.6"/><rect x="3" y="3" width="9.2" height="9.2" fill="url(#gCpu)" stroke="#2a2a2a" stroke-width="0.9"/><rect x="12" y="12" width="2" height="2" fill="#f0a020"/><rect x="0" y="15" width="1" height="1" fill="#e8a020"/><rect x="2" y="15" width="1" height="1" fill="#e8a020"/><rect x="4" y="15" width="1" height="1" fill="#e8a020"/><rect x="6" y="15" width="1" height="1" fill="#e8a020"/><rect x="8" y="15" width="1" height="1" fill="#e8a020"/><rect x="10" y="15" width="1" height="1" fill="#e8a020"/><rect x="12" y="15" width="1" height="1" fill="#e8a020"/><rect x="15" y="2" width="1" height="1" fill="#e8a020"/><rect x="15" y="4" width="1" height="1" fill="#e8a020"/><rect x="15" y="6" width="1" height="1" fill="#e8a020"/><rect x="15" y="8" width="1" height="1" fill="#e8a020"/><rect x="15" y="10" width="1" height="1" fill="#e8a020"/><rect x="15" y="12" width="1" height="1" fill="#e8a020"/></svg>
<span class="t" style="left:61.7px;top:324px;letter-spacing:-0.392px">Processors</span>
<svg style="left:29px;top:347.6px" width="6" height="10" viewBox="0 0 6 10"><path d="M0.6 0.8V9.2L4.9 5Z" fill="#fff" stroke="#989898" stroke-width="1"/></svg>
<svg style="left:41px;top:343px" width="16" height="16" viewBox="0 0 16 16"><rect x="0.5" y="0.6" width="15" height="12" rx="1.6" fill="#dcdee1" stroke="#7e838a" stroke-width="0.9"/><rect x="2.2" y="2" width="9.8" height="8.8" fill="#dcefd4" stroke="#6a7a5c" stroke-width="0.5"/><path d="M2.4 2.2h7L2.4 9z" fill="#93a878"/><path d="M4 9.6C6.6 8.6 8 6 9.4 3.2M3.6 5.2C5.2 4.6 6.6 5.6 7.6 6.4" stroke="#f4e610" stroke-width="1.9" fill="none"/><circle cx="14" cy="4.2" r="0.8" fill="#111"/><circle cx="14" cy="7.4" r="0.8" fill="#111"/><rect x="13.4" y="5.2" width="1.2" height="1.2" fill="#fff"/><rect x="13.4" y="8.4" width="1.2" height="1.2" fill="#fff"/><circle cx="2" cy="4.4" r="0.7" fill="#111"/><circle cx="2" cy="7" r="0.7" fill="#111"/><circle cx="2" cy="9.4" r="0.7" fill="#111"/></svg>
<span class="t" style="left:61.7px;top:342px;letter-spacing:-0.505px">Sensors</span>
<svg style="left:29px;top:365.6px" width="6" height="10" viewBox="0 0 6 10"><path d="M0.6 0.8V9.2L4.9 5Z" fill="#fff" stroke="#989898" stroke-width="1"/></svg>
<svg style="left:41px;top:361px" width="16" height="16" viewBox="0 0 16 16"><rect x="4.8" y="0.6" width="6.6" height="13.4" rx="0.6" fill="#fdfdfd" stroke="#606366" stroke-width="0.9"/><rect x="6.9" y="2.6" width="2.4" height="11" fill="#e4e6e8" stroke="#a0a3a8" stroke-width="0.5"/><circle cx="8.1" cy="2.6" r="1.1" fill="#55c030"/><rect x="3.4" y="14" width="9.4" height="1.5" fill="#2b2b2b"/></svg>
<span class="t" style="left:61.7px;top:360px;letter-spacing:-0.193px">Software devices</span>
<svg style="left:29px;top:383.6px" width="6" height="10" viewBox="0 0 6 10"><path d="M0.6 0.8V9.2L4.9 5Z" fill="#fff" stroke="#989898" stroke-width="1"/></svg>
<svg style="left:41px;top:379px" width="16" height="16" viewBox="0 0 16 16"><path d="M4.2 5L10.2 0.2H11V15.8H10.2L4.2 11Z" fill="url(#gCone)"/><rect x="10.1" y="0.2" width="0.9" height="15.6" fill="#8fa2b4"/><rect x="0.8" y="4.8" width="3.6" height="6.2" fill="#7e93a8"/><rect x="2.6" y="4.8" width="1" height="6.2" fill="#33383d"/><rect x="0.8" y="7" width="1.8" height="1.8" fill="#b9d0e8"/></svg>
<span class="t" style="left:61.7px;top:378px;letter-spacing:-0.024px">Sound, video and game controllers</span>
<svg style="left:29px;top:401.6px" width="6" height="10" viewBox="0 0 6 10"><path d="M0.6 0.8V9.2L4.9 5Z" fill="#fff" stroke="#989898" stroke-width="1"/></svg>
<svg style="left:41px;top:397px" width="16" height="16" viewBox="0 0 16 16"><path d="M13 5.2L8 0.9L1 8L8 15.1L13 10.8" fill="none" stroke="#3c3d40" stroke-width="2.1" stroke-linejoin="miter"/><path d="M9.2 8h6.8" stroke="#3c3d40" stroke-width="2.1"/><path d="M7.6 2.2L2.8 7" stroke="#a8abb0" stroke-width="0.8"/></svg>
<span class="t" style="left:61.7px;top:396px;letter-spacing:-0.057px">Storage controllers</span>
<svg style="left:29px;top:419.6px" width="6" height="10" viewBox="0 0 6 10"><path d="M0.6 0.8V9.2L4.9 5Z" fill="#fff" stroke="#989898" stroke-width="1"/></svg>
<svg style="left:41px;top:415px" width="16" height="16" viewBox="0 0 16 16"><rect x="3.6" y="1.2" width="12" height="10.6" rx="0.8" fill="#d9d6cf" stroke="#a9a59c" stroke-width="0.6"/><rect x="4.8" y="2.4" width="9.6" height="8.0" fill="url(#gScr)"/><path d="M7.6 13.4h4l1.4 1.2h-6.8z" fill="#b4b1a9"/><rect x="8.6" y="11.8" width="2" height="1.8" fill="#c9c6be"/><rect x="0.5" y="5.6" width="2.4" height="8.6" rx="0.8" fill="#d6d6d6" stroke="#8b8b8b" stroke-width="0.6"/><rect x="1" y="6.6" width="1.4" height="1.4" fill="#3fc02a"/><rect x="0.3" y="14" width="2.8" height="0.8" fill="#6b6b6b"/></svg>
<span class="t" style="left:61.7px;top:414px;letter-spacing:-0.272px">System devices</span>
<svg style="left:29px;top:437.6px" width="6" height="10" viewBox="0 0 6 10"><path d="M0.6 0.8V9.2L4.9 5Z" fill="#fff" stroke="#989898" stroke-width="1"/></svg>
<svg style="left:41px;top:433px" width="16" height="16" viewBox="0 0 16 16"><rect x="5.2" y="0.6" width="5.6" height="5" fill="#e9e9ec" stroke="#8a8c94" stroke-width="0.9"/><rect x="6.4" y="1.6" width="3.2" height="2.4" fill="#c9cad0"/><path d="M4.2 5.2h7.6v5.2c0 1.6-1.4 2.6-2.8 3.2v1.6H7v-1.6c-1.4-0.6-2.8-1.6-2.8-3.2z" fill="url(#gDark)" stroke="#3a3c40" stroke-width="0.5"/><rect x="7.2" y="14" width="1.6" height="2" fill="#222"/></svg>
<span class="t" style="left:61.7px;top:432px;letter-spacing:-0.198px">Universal Serial Bus controllers</span>
<svg style="left:29px;top:455.6px" width="6" height="10" viewBox="0 0 6 10"><path d="M0.6 0.8V9.2L4.9 5Z" fill="#fff" stroke="#989898" stroke-width="1"/></svg>
<svg style="left:41px;top:451px" width="16" height="16" viewBox="0 0 16 16"><rect x="4.3" y="0.5" width="7.4" height="5.2" fill="#fff" stroke="#a9abae" stroke-width="0.9"/><path d="M2.6 5H13.4L15.6 6.8V12.6H0.4V6.8Z" fill="#c6cad2" stroke="#7e8186" stroke-width="0.8"/><path d="M3.3 5.2H12.7L13.1 10H2.9Z" fill="url(#gPrn)"/><rect x="1.2" y="10.8" width="2.2" height="1.3" fill="#fff"/><rect x="12.6" y="10.8" width="2.2" height="1.3" fill="#fff"/><rect x="3.9" y="10.2" width="8.2" height="5.3" fill="#fff" stroke="#9b9da1" stroke-width="0.8"/><rect x="3.9" y="10.1" width="8.2" height="0.9" fill="#c4d4e6"/><path d="M3 12.2l0.7-1.4l0.7 1.4zM11.6 12.2l0.7-1.4l0.7 1.4z" fill="#16182a"/><rect x="6.2" y="11.2" width="1.5" height="2.4" fill="#2a7ee4"/><rect x="7.7" y="11.2" width="2.2" height="2.4" fill="#1a6450"/><rect x="8.3" y="11.2" width="0.6" height="2.4" fill="#9ad8c0"/><rect x="14" y="8.6" width="1" height="1.2" fill="#78e458"/></svg>
<span class="t" style="left:61.7px;top:450px;letter-spacing:-0.178px">WSD Print Provider</span>
</div>
<div style="left:815px;top:183px;width:16px;height:461px;background:#f0f0f0"></div>
<div style="left:815px;top:200px;width:15px;height:411px;background:#cdcdcd"></div>
<svg style="left:818px;top:188px" width="9" height="8" viewBox="0 0 9 8"><path d="M1.2 6.4L4.5 2.8L7.8 6.4" fill="none" stroke="#4a4a4a" stroke-width="2.3"/></svg><svg style="left:818px;top:632px" width="9" height="8" viewBox="0 0 9 8"><path d="M1.2 1.8L4.5 5.4L7.8 1.8" fill="none" stroke="#4a4a4a" stroke-width="2.3"/></svg>
<div style="left:54px;top:646px;width:779px;height:1px;background:#e2e2e2"></div>
<div style="left:612px;top:648px;width:1px;height:20px;background:#d7d7d7"></div>
<div style="left:745px;top:648px;width:1px;height:20px;background:#d7d7d7"></div>
<div style="left:830px;top:648px;width:1px;height:20px;background:#d7d7d7"></div>
</body></html>
